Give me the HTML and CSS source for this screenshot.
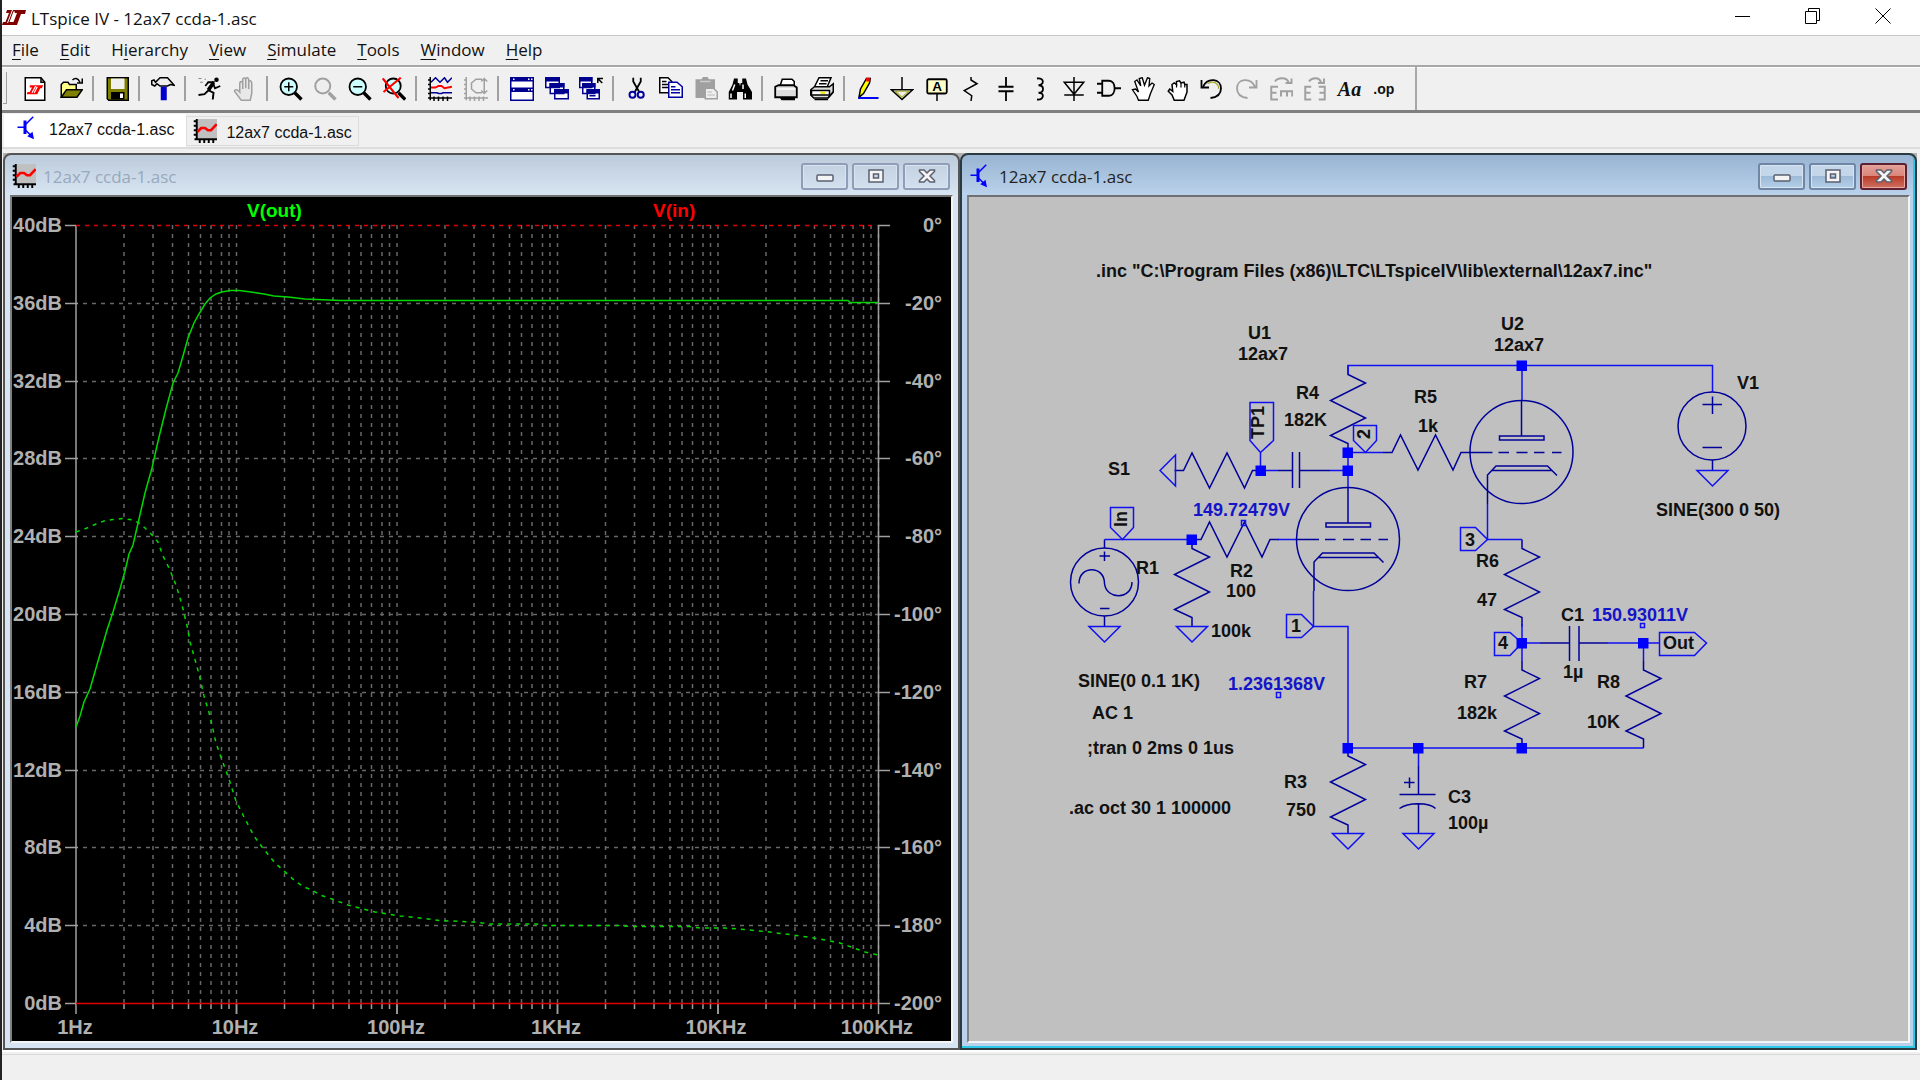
FILE: index.html
```html
<!DOCTYPE html>
<html lang="en">
<head>
<meta charset="utf-8">
<title>LTspice IV - 12ax7 ccda-1.asc</title>
<link rel="stylesheet" href="styles.css">
</head>
<body>
<svg class="defs" aria-hidden="true">
  <defs>
    <symbol id="i-plot" viewBox="0 0 16 16"><rect x="2" width="14" height="13" fill="#c0c0c0"/><path d="M2.500 0V14M1 13.500H16M.5 1.500H2M.5 4.500H2M.5 7.500H2M.5 10.500H2M4.500 14v2M7.500 14v2M10.500 14v2M13.500 14v2" stroke="#000" stroke-width="1.300" fill="none"/><path d="M3 8.500L5.500 6H8L10 7.500H12L15.800 3.500" fill="none" stroke="#f00" stroke-width="1.700"/></symbol>
    <symbol id="i-npn" viewBox="0 0 16 16"><path d="M1 7.500H6M6 6L11.500.500M6 9L10 13" stroke="#00f" fill="none"/><path d="M5 3h2v9H5zM12 15.500L7.500 13.500L11 10.500z" fill="#00f"/></symbol>
    <symbol id="w-min" viewBox="0 0 18 14"><rect x="1" y="6" width="16" height="6" rx="1" fill="#f4f4f4" stroke="#5a6070" stroke-width="1.500"/></symbol>
    <symbol id="w-max" viewBox="0 0 18 14"><path d="M2 1H16V13H2zM6.500 5V9H11.500V5z" fill="#f4f4f4" fill-rule="evenodd" stroke="#5a6070" stroke-width="1.500"/></symbol>
    <symbol id="w-close" viewBox="0 0 18 14"><path d="M1.500 1H6L9 4L12 1H16.500V2.500L12 7L16.500 11.500V13H12L9 10L6 13H1.500V11.500L6 7L1.500 2.500z" fill="#f4f4f4" stroke="#5a6070" stroke-width="1.500"/></symbol>
    <g id="res"><path d="M0 0V9L17.500 17.500L-17.500 35L17.500 52.500L-17.500 70L0 78V87"/></g>
    <path id="gnd" d="M-15.500 0H15.500L0 15.500z"/>
    <rect id="node" x="-5" y="-5" width="10.500" height="10.500"/>
    <g id="tube"><circle cx="0" cy="0" r="51.500"/><path d="M0-52V-16M-22-16H22.500V-12H-22zM-52 0.500H-29M-23 .5h10.500M-5 .5H6M12.500 .5H23M30.500 .5H40M-34 52V23L-25.500 14H26L35.500 23.500M-30 18.500H30"/></g>
    <g id="decade" class="grid"><path d="M48 224V1002M77 224V1002M96.500 224V1002M112.500 224V1002M124.500 224V1002M135 224V1002M145.500 224V1002M153 224V1002M160.500 224V1002"/></g>
    <path id="ticks" class="axis" d="M0 1002V1013M48 1003v5M77 1003v5M96.500 1003v5M112.500 1003v5M124.500 1003v5M135 1003v5M145.500 1003v5M153 1003v5M160.500 1003v10"/>
  </defs>
</svg>

<header class="titlebar">
  <svg class="logo" viewBox="0 0 24 18" aria-hidden="true"><path d="M5 1H15.500L15 2.500H11.500L7.500 13H11.500L15 4H12.500L13.500 1H24L23 5H19L15 16H0L1 13H3.500L7 4H4z" fill="#800000"/><path d="M10.500 1L5.500 14" stroke="#fff"/></svg>
  <h1>LTspice IV - 12ax7 ccda-1.asc</h1>
  <div class="sysbuttons">
    <button type="button" aria-label="Minimize"><svg viewBox="0 0 16 16"><path d="M0 8.500H15"/></svg></button>
    <button type="button" aria-label="Restore"><svg viewBox="0 0 16 16"><path d="M.5 3.500H11.500V15.500H.5zM3.500 3.500V.5H14.500V12.500H11.500"/></svg></button>
    <button type="button" aria-label="Close"><svg viewBox="0 0 16 16"><path d="M.5.500L15.500 15.500M15.500.500L.5 15.500"/></svg></button>
  </div>
</header>

<nav class="menubar" aria-label="Menu">
  <button type="button"><u>F</u>ile</button>
  <button type="button"><u>E</u>dit</button>
  <button type="button">H<u>i</u>erarchy</button>
  <button type="button"><u>V</u>iew</button>
  <button type="button"><u>S</u>imulate</button>
  <button type="button"><u>T</u>ools</button>
  <button type="button"><u>W</u>indow</button>
  <button type="button"><u>H</u>elp</button>
</nav>

<div class="toolbar" role="toolbar" aria-label="Tools">
  <div class="group two">
    <button type="button" aria-label="New schematic"><svg viewBox="0 0 16 16"><path d="M1.500.500H12L14.500 3.500V15.500H1.500z" fill="#fff" stroke="#000"/><path d="M12 .500V3.500H14.500" fill="none" stroke="#000"/><path d="M4.500 5.500H13.500L12.500 7.500H11.500L9.500 11.500H2.500L3 10H4.500L6 7H4.500z" fill="#f00"/><path d="M8.500 6L6 10.500M9.500 6.500L7.500 10.500" stroke="#fff" stroke-width=".8"/></svg></button>
    <button type="button" aria-label="Open"><svg viewBox="0 0 16 16"><path d="M1.500 13.500V5L3 3.500H6L7 5H11.500V8" fill="#ff8" stroke="#000"/><path d="M1.500 13.500L5 8.500H15.500L12 13.500z" fill="#808000" stroke="#000"/><path d="M9 2C10.500 .500 12.500 .500 14 3.500M15.500 1V4H12" fill="none" stroke="#000"/></svg></button>
  </div>
  <span class="sep"></span>
  <div class="group"><button type="button" aria-label="Save"><svg viewBox="0 0 16 16"><path d="M1.500.500H15.500V15.500H2.500L1.500 14.500z" fill="#808000" stroke="#000"/><path d="M4 1H13V8H4z" fill="#f0f0f0"/><path d="M4 10H13V15H4z" fill="#000"/><path d="M10 11h2v3h-2z" fill="#fff"/></svg></button></div>
  <span class="sep"></span>
  <div class="group"><button type="button" aria-label="Control panel"><svg viewBox="0 0 16 16"><path d="M.5 5V2.500L2 2L3 3.500L6 .500H11L15.500 5.500L13 5L11 6H6L4 4.500L2.500 6z" fill="#eee" stroke="#000"/><path d="M6.500 6.500H10.500V15.500H6.500z" fill="#00c"/></svg></button></div>
  <span class="sep"></span>
  <div class="group two">
    <button type="button" aria-label="Run"><svg viewBox="0 0 16 16"><circle cx="13" cy="1.800" r="1.500"/><path d="M7 3.500L11 3.500L8 9L11 10.500L10.500 15" fill="none" stroke="#000" stroke-width="1.300"/><path d="M10.500 2.500L12 4.500L8.500 9.500L6.500 8z"/><path d="M7.500 3.500L5.500 6M11 5L12 7.500L15.500 6M7.500 9L5 11.500L1 12" fill="none" stroke="#000" stroke-width="1.200"/><path d="M1 1H3M2 3.500H4M5 1.500H6" stroke="#888" stroke-width=".8"/></svg></button>
    <button type="button" aria-label="Halt" disabled><svg viewBox="0 0 16 16"><path d="M4.500 10V4.500C4.500 2.500 6.500 2.500 6.500 4.500V8V2C6.500 .200 8.500 .200 8.500 2V7.500V1.800C8.500 0 10.500 0 10.500 2V8V3.500C10.500 2 12.500 2 12.500 4V11L11.500 15.500H5.500L1 9.500C1 8 3 8 4.500 10z" fill="#e8e8e8" stroke="#a0a0a0"/></svg></button>
  </div>
  <span class="sep"></span>
  <div class="group four">
    <button type="button" aria-label="Zoom in"><svg viewBox="0 0 16 16"><circle cx="6.500" cy="6.500" r="5.500" fill="#cff" stroke="#000" stroke-width="1.200"/><path d="M3.500 6.500h6M6.500 3.500v6" stroke="#000"/><path d="M10.500 10.500L15 15" stroke="#000" stroke-width="2.200"/></svg></button>
    <button type="button" aria-label="Pan" disabled><svg viewBox="0 0 16 16"><circle cx="6.500" cy="6" r="5" fill="#eee" stroke="#a0a0a0" stroke-width="1.300"/><path d="M10.500 10.500L15 15" stroke="#a0a0a0" stroke-width="2.200"/></svg></button>
    <button type="button" aria-label="Zoom out"><svg viewBox="0 0 16 16"><circle cx="6.500" cy="6.500" r="5.500" fill="#cff" stroke="#000" stroke-width="1.200"/><path d="M3.500 6.500h6" stroke="#000"/><path d="M10.500 10.500L15 15" stroke="#000" stroke-width="2.200"/></svg></button>
    <button type="button" aria-label="Zoom full extents"><svg viewBox="0 0 16 16"><circle cx="7.500" cy="6" r="5" fill="#cff" stroke="#000" stroke-width="1.200"/><path d="M11 10.500L15.500 15" stroke="#000" stroke-width="2.200"/><path d="M.5 1L11 14M1 10L12.500.500" stroke="#f00" stroke-width="1.400"/></svg></button>
  </div>
  <span class="sep"></span>
  <div class="group two">
    <button type="button" aria-label="Autorange"><svg viewBox="0 0 16 16"><path d="M1.500 0V15.500M0 14H16M0 2H2M0 5H2M0 8H2M0 11H2M4 13v3M7 13v3M10 13v3M13 13v3" stroke="#000"/><path d="M2 3.500L5 .500L8 3.500L11 .500L13 3.500L16 .500M2 10.500H6L7 11H9L10 10.500H16" fill="none" stroke="#000090"/><path d="M2 7H5L7 6H9L11 7.500L16 6.500" fill="none" stroke="#f00" stroke-width="1.300"/></svg></button>
    <button type="button" aria-label="FFT" disabled><svg viewBox="0 0 16 16"><path d="M1.500 0V15.500M0 14H16M0 2H2M0 5H2M0 8H2M0 11H2M4 13v3M7 13v3M10 13v3M13 13v3M13.500 1V11M11.500 3L13.500 1L15.500 3M11.500 9L13.500 11L15.500 9M12 1.500H8L5 4V8L8 10.500H12" fill="none" stroke="#a0a0a0"/></svg></button>
  </div>
  <span class="sep"></span>
  <div class="group three">
    <button type="button" aria-label="Tile windows"><svg viewBox="0 0 16 16"><path d="M.5.500H15.500V15.500H.5z" fill="#fff" stroke="#000090"/><path d="M0 0H16V3H0zM0 7H16V10H0z" fill="#000090"/><path d="M12 1.500h1M14 1.500h1M12 8.500h1M14 8.500h1M2 1.500h1M2 8.500h1" stroke="#fff"/></svg></button>
    <button type="button" aria-label="Cascade windows"><svg viewBox="0 0 16 16"><g fill="#fff" stroke="#000090"><path d="M.5.500H9.500V7H.5zM3.500 4.500H12.500V11H3.500zM6.500 8.500H15.500V14.500H6.500z"/></g><path d="M0 0H10V3H0zM3 4H13V7H3zM6 8H16V11H6z" fill="#000090"/></svg></button>
    <button type="button" aria-label="Close all windows"><svg viewBox="0 0 16 16"><g fill="#fff" stroke="#000090"><path d="M.5.500H8.500V7H.5zM2.500 4.500H10.500V11H2.500zM5.500 8.500H13.500V14.500H5.500z"/></g><path d="M0 0H9V3H0zM2 4H11V7H2zM5 8H14V11H5z" fill="#000090"/><path d="M7 12.500h4" stroke="#000090"/><path d="M12.500 4V1H16M12.500 1L15.500 4" fill="none" stroke="#000"/></svg></button>
  </div>
  <span class="sep"></span>
  <div class="group four">
    <button type="button" aria-label="Cut"><svg viewBox="0 0 16 16"><path d="M5.500.500V3L9.500 10M10.500.500V3L6.500 10" fill="none" stroke="#000" stroke-width="1.200"/><circle cx="5" cy="11.800" r="2" fill="none" stroke="#0000a0" stroke-width="1.300"/><circle cx="10.500" cy="11.800" r="2" fill="none" stroke="#0000a0" stroke-width="1.300"/></svg></button>
    <button type="button" aria-label="Copy"><svg viewBox="0 0 16 16"><path d="M.5.500H6L8.500 3V10.500H.5z" fill="#fff" stroke="#000"/><path d="M2 3h3M2 5h5M2 7h5" stroke="#000"/><path d="M6.500 3.500H12L15.500 6.500V13.500H6.500z" fill="#fff" stroke="#0000a0"/><path d="M8 6.500h3M8 8.500h6M8 10.500h6" stroke="#0000a0"/></svg></button>
    <button type="button" aria-label="Paste" disabled><svg viewBox="0 0 16 16"><path d="M1 1.500H5L6 0H9L10 1.500H14V14H1z" fill="#a0a0a0"/><path d="M7.500 7.500H13L15.500 10V14.500H7.500z" fill="#eee" stroke="#a0a0a0"/><path d="M9 10h3M9 12h5M4 3h7" stroke="#ccc"/></svg></button>
    <button type="button" aria-label="Find"><svg viewBox="0 0 16 16"><path d="M4 1H6.500V4H7.500L8 6L8.500 4H9.500V1H12L13 5L16 10V15H10V10H6V15H.5V10L3 5z"/><path d="M2 11v3M11.500 11v3M4.500 5L3 9M10 5V8" stroke="#fff"/></svg></button>
  </div>
  <span class="sep"></span>
  <div class="group two">
    <button type="button" aria-label="Print preview"><svg viewBox="0 0 16 16"><path d="M4 6L5.500 1.500H12L13.500 3V6" fill="#fff" stroke="#000"/><path d="M.8 6.500L3 5.500H13L15.200 7V13.500H.8z" fill="#ddd" stroke="#000" stroke-width="1.200"/><path d="M2 8h12" stroke="#fff"/><path d="M4 14H14V15.500H5z"/></svg></button>
    <button type="button" aria-label="Print"><svg viewBox="0 0 16 16"><path d="M3 6.500L6 .500H14L11.500 6.500" fill="#fff" stroke="#000"/><path d="M7 2.500H12M6 4.500H11" stroke="#000"/><path d="M.5 8.500L3 6.500H13L15.500 4.500V10L12 14H2.500L.5 12z" fill="#ddd" stroke="#000"/><path d="M1 9H13V12H1zM12 14L15.500 10" fill="#fff" stroke="#000"/><path d="M7 10.500H10" stroke="#ee0" stroke-width="1.500"/><path d="M3 15h9" stroke="#000"/></svg></button>
  </div>
  <span class="sep"></span>
  <div class="group tools">
    <button type="button" aria-label="Wire"><svg viewBox="0 0 16 16"><path d="M2 13.500L3 8L7 1H9.500L9 4L5 11z" fill="#ff0" stroke="#000"/><path d="M6.500.500H9.500V3H7z" fill="#e00"/><path d="M1.500 14H15" stroke="#00f" stroke-width="1.300"/></svg></button>
    <button type="button" aria-label="Ground"><svg viewBox="0 0 16 16"><path d="M8 0V8M1 8.500H15L8 15z" fill="none" stroke="#000"/><path d="M3.500 9.500H12.500L8 13.500z" fill="none" stroke="#b0b030" stroke-width=".8"/></svg></button>
    <button type="button" aria-label="Label net"><svg viewBox="0 0 16 16"><rect x="1.500" y="1.500" width="13" height="9.500" rx="1" fill="#ffffc8" stroke="#000" stroke-width="1.200"/><text x="8" y="9.500" font-size="9" font-weight="bold" text-anchor="middle">A</text><path d="M8 11v5" stroke="#000"/></svg></button>
    <button type="button" aria-label="Resistor"><svg viewBox="0 0 16 16"><path d="M8 0V2L12 4.500L3.500 9L8.500 12.500L8 16" fill="none" stroke="#000"/></svg></button>
    <button type="button" aria-label="Capacitor"><svg viewBox="0 0 16 16"><path d="M8 0V6M3 6.500H13M3 9.500H13M8 10V16" stroke="#000" stroke-width="1.200"/></svg></button>
    <button type="button" aria-label="Inductor"><svg viewBox="0 0 16 16"><path d="M6 1C11 0 11 5.500 7 5.500C11 5.500 11 10.500 7 10.500C11.500 10.500 10.500 15.500 6 15" fill="none" stroke="#000" stroke-width="1.200"/></svg></button>
    <button type="button" aria-label="Diode"><svg viewBox="0 0 16 16"><path d="M8 0V16M1.500 3.500H14.500L8 11.500zM1.500 12H14.500" fill="none" stroke="#000"/></svg></button>
    <button type="button" aria-label="Component"><svg viewBox="0 0 16 16"><path d="M0 4.500H3M0 10.500H3M3.500 2.500H8C13 2.500 13 12.500 8 12.500H3.500zM12 7.500H16" fill="none" stroke="#000" stroke-width="1.200"/></svg></button>
    <button type="button" aria-label="Move"><svg viewBox="0 0 16 16"><path d="M1 8.500L3 8L5 10L2.500 3L4 2L6.500 6L5.500 1L7.500.500L9 5.500L11 .500L12.500 1L12 6L14 4L15.500 5L13 11L11.500 15.500H5L4 13z" fill="#fff" stroke="#000" stroke-width=".9"/></svg></button>
    <button type="button" aria-label="Drag"><svg viewBox="0 0 16 16"><path d="M4.500 9.500L4 5L5.500 4L7 5V3L9 2.500L10 4L12 3.500L12.500 5L14 5V10L12 15.500H5.500L4 12L1.500 9.500L2.500 8z" fill="#fff" stroke="#000"/><path d="M7 5v2M10 4v3M12.500 5v2" stroke="#000" stroke-width=".8"/></svg></button>
    <button type="button" aria-label="Undo"><svg viewBox="0 0 16 16"><path d="M1 2V7H6" fill="none" stroke="#000" stroke-width="1.200"/><path d="M2 6.500C5 0 14 1 14 7.500C14 11 12 13.500 7 14" fill="none" stroke="#000" stroke-width="1.200"/><path d="M5 4.500C9 1.800 12.500 4.500 12.500 8" fill="none" stroke="#aa3" stroke-width=".8"/></svg></button>
    <button type="button" aria-label="Redo" disabled><svg viewBox="0 0 16 16"><path d="M15 2V7H10M14 6.500C11 0 2 1 2 7.500C2 11 4 13.500 9 14" fill="none" stroke="#a0a0a0" stroke-width="1.200"/></svg></button>
    <button type="button" aria-label="Rotate" disabled><svg viewBox="0 0 16 16"><path d="M6 6.500H1.500V15H6M1.500 10.500H5M8 13V9.500H16M12 9.500V13M15.500 9.500V13M4 3C6 0 12 0 13 3.500M15 1V4H11" fill="none" stroke="#a0a0a0" stroke-width="1.300"/></svg></button>
    <button type="button" aria-label="Mirror" disabled><svg viewBox="0 0 16 16"><path d="M5.500 6.500H1.500V15H5.500M1.500 10.500H5M10.500 6.500H14.500V15H10.500M14.500 10.500H11M4 3C6 0 11 0 12 3.500M14 1V4H10" fill="none" stroke="#a0a0a0" stroke-width="1.300"/></svg></button>
    <button type="button" class="aa">Aa</button>
    <button type="button" class="op">.op</button>
  </div>
  <span class="toolbar-end"></span>
</div>

<div class="tabs" role="tablist">
  <button type="button" role="tab" aria-selected="true" class="tab active"><svg><use href="#i-npn"/></svg><span>12ax7 ccda-1.asc</span></button>
  <button type="button" role="tab" aria-selected="false" class="tab"><svg><use href="#i-plot"/></svg><span>12ax7 ccda-1.asc</span></button>
</div>

<main class="workspace">
  <section class="window">
    <header class="caption">
      <svg class="caption-icon"><use href="#i-plot"/></svg>
      <h2>12ax7 ccda-1.asc</h2>
      <div class="winbuttons">
        <button type="button" aria-label="Minimize"><svg><use href="#w-min"/></svg></button>
        <button type="button" aria-label="Maximize"><svg><use href="#w-max"/></svg></button>
        <button type="button" aria-label="Close"><svg><use href="#w-close"/></svg></button>
      </div>
    </header>
    <svg class="client plot" viewBox="12 196 939 844" role="img" aria-label="Frequency response">
      <use href="#decade" x="76"/><use href="#decade" x="236.500"/><use href="#decade" x="397"/><use href="#decade" x="557.500"/><use href="#decade" x="718"/>
      <path class="grid" d="M83 302.500H878M83 380.500H878M83 457.500H878M83 535.500H878M83 613.500H878M83 691.500H878M83 769.500H878M83 846.500H878M83 924.500H878"/>
      <use href="#ticks" x="76"/><use href="#ticks" x="236.500"/><use href="#ticks" x="397"/><use href="#ticks" x="557.500"/><use href="#ticks" x="718"/>
      <path class="axis" d="M76 224V1002M878.500 224V1002M65 224.500H76M65 302.500H78M65 380.500H78M65 457.500H78M65 535.500H78M65 613.500H78M65 691.500H78M65 769.500H78M65 846.500H78M65 924.500H78M65 1002.500H76M878 224.500H890M878 302.500H890M878 380.500H890M878 457.500H890M878 535.500H890M878 613.500H890M878 691.500H890M878 769.500H890M878 846.500H890M878 924.500H890M878 1002.500H890"/>
      <path class="vin phase" d="M76 224.500H878"/>
      <path class="vin" d="M76 1002.500H878"/>
      <path class="vout" d="M76 726L80 715L84 701L90 688L107 629L113 611L120 588L125 570L129 553L133 544L139 518L145 492L152 467L159 436L166 408L173 382L178 372L183 355L188 337L194 322L199 313L205 303L210 297L216 293L222 291L230 289.500L239 289.500L251 291L264 293L274 295L288 296L305 298L341 299.500H848L850 301.500H878"/>
      <path class="vout phase" d="M76 531L87 527L96 523L104 520L113 518.500L123 517.500L133 519L139 522L145 527L152 534L158 541L163 555L169 567L176 584L180 597L183 608L188 629L190 641L194 655L199 673L204 695L210 715L216 742L222 759L229 778L236 800L244 816L254 835L262 846L275 862L284 870L295 880L304 886L312 889L320 894L332 898L348 904L375 911L400 915L420 917L440 919.500L473 921L490 923H537L545 924.500H620L630 925.500H690L700 927H725L750 929L770 931L800 935L820 938L840 942L865 951L878 954"/>
      <g class="trace">
        <text x="247" y="216" fill="#0f0">V(out)</text><text x="653" y="216" fill="#f00">V(in)</text>
      </g>
      <g class="scale right">
        <text x="62" y="231">40dB</text><text x="62" y="309">36dB</text><text x="62" y="387">32dB</text><text x="62" y="464">28dB</text><text x="62" y="542">24dB</text><text x="62" y="620">20dB</text><text x="62" y="698">16dB</text><text x="62" y="776">12dB</text><text x="62" y="853">8dB</text><text x="62" y="931">4dB</text><text x="62" y="1009">0dB</text>
        <text x="942" y="231">0°</text><text x="942" y="309">-20°</text><text x="942" y="387">-40°</text><text x="942" y="464">-60°</text><text x="942" y="542">-80°</text><text x="942" y="620">-100°</text><text x="942" y="698">-120°</text><text x="942" y="776">-140°</text><text x="942" y="853">-160°</text><text x="942" y="931">-180°</text><text x="942" y="1009">-200°</text>
      </g>
      <g class="scale middle">
        <text x="75" y="1033">1Hz</text><text x="235" y="1033">10Hz</text><text x="396" y="1033">100Hz</text><text x="556" y="1033">1KHz</text><text x="716" y="1033">10KHz</text><text x="877" y="1033">100KHz</text>
      </g>
    </svg>
  </section>

  <section class="window active">
    <header class="caption">
      <svg class="caption-icon"><use href="#i-npn"/></svg>
      <h2>12ax7 ccda-1.asc</h2>
      <div class="winbuttons">
        <button type="button" aria-label="Minimize"><svg><use href="#w-min"/></svg></button>
        <button type="button" aria-label="Maximize"><svg><use href="#w-max"/></svg></button>
        <button type="button" aria-label="Close" class="close"><svg><use href="#w-close"/></svg></button>
      </div>
    </header>
    <svg class="client schematic" viewBox="969 196 939 844" role="img" aria-label="Amplifier schematic">
      <g class="part">
        <use href="#res" x="1348" y="364.500"/>
        <use href="#res" x="1522" y="538.500"/>
        <use href="#res" x="1522" y="660"/>
        <use href="#res" x="1643.500" y="660"/>
        <use href="#res" x="1348" y="746"/>
        <use href="#res" x="1192" y="538.500"/>
        <use href="#res" transform="translate(1192 538.500) rotate(-90)"/>
        <use href="#res" transform="translate(1383 451.500) rotate(-90)"/>
        <use href="#res" transform="translate(1174.500 469.500) rotate(-90)"/>
        <use href="#tube" x="1521.500" y="451"/>
        <use href="#tube" x="1348" y="538"/>
        <path d="M1278 469.500H1292.500M1292.500 451V487M1299.500 451V487M1299.500 469.500H1330"/>
        <path d="M1540 642H1569.500M1569.500 625V660M1579 625V660M1579 642H1608"/>
        <path d="M1418.500 765V793.500M1399.500 793.500H1435.500M1399.500 807.500C1408 801 1429 801 1435.500 807.500M1418.500 802.500V832M1404 781.500H1414.500M1409.500 776.500V787"/>
        <circle cx="1104.500" cy="581" r="34"/>
        <path d="M1104.500 538.500V547M1099.500 555H1110M1104.500 550.500V560M1100 607.500H1109.500M1104.500 615V625M1079 582.500C1079 564 1104.500 564 1104.500 582.500C1106 599 1132 599 1132 581"/>
        <circle cx="1712" cy="425" r="34"/>
        <path d="M1712.500 390V391M1702.500 403.500H1722M1712.500 395.500V413M1702.500 446.500H1722M1712.500 459V469.500"/>
      </g>
      <g class="wire">
        <path d="M1348 373V364.500H1712.500V391M1522 364.500V399M1348 451.500V486M1348 451.500H1383M1260.500 469.500H1278M1330 469.500H1348M1104.500 538.500H1192M1278 538.500H1296M1313.500 590V625.500H1348V747H1643.500M1487.500 503V538.500H1522M1522 623V660M1522 642H1540M1608 642H1659.500M1643.500 642V660M1418.500 747V765"/>
        <use href="#gnd" x="1104.500" y="625.500"/><use href="#gnd" x="1192" y="625.500"/><use href="#gnd" x="1348" y="832.500"/><use href="#gnd" x="1418.500" y="832.500"/><use href="#gnd" x="1712.500" y="469.500"/>
        <use href="#gnd" transform="translate(1175.500 469.500) rotate(90)"/>
        <path d="M1260.500 469.500V451.500L1250 439.500V401.500H1273.500V439.500L1260.500 451.500"/>
        <path d="M1353.500 424.500H1376.500V439.500L1365.500 451.500L1353.500 439.500z"/>
        <path d="M1110.500 506.500H1133.500V526.500L1122.500 538.500L1110.500 526.500z"/>
        <path d="M1286.500 613.500H1301.500L1313.500 625.500L1301.500 636.500H1286.500z"/>
        <path d="M1460.500 526.500H1475.500L1487.500 538.500L1475.500 549.500H1460.500z"/>
        <path d="M1494.500 631.500H1510L1522 642L1510 654.500H1494.500z"/>
        <path d="M1659.500 631.500H1694.500L1706.500 642L1694.500 654.500H1659.500z"/>
        <path d="M1241.500 519.500h4v5h-4zM1640.500 622.500h4v4h-4zM1276.500 691.500h4v5h-4z"/>
      </g>
      <g fill="#0000ff">
        <use href="#node" x="1521.500" y="364.500"/><use href="#node" x="1347.500" y="451.500"/><use href="#node" x="1347.500" y="469.500"/><use href="#node" x="1260.500" y="469.500"/><use href="#node" x="1191.500" y="538.500"/><use href="#node" x="1347.500" y="747"/><use href="#node" x="1418" y="747"/><use href="#node" x="1521.500" y="747"/><use href="#node" x="1521.500" y="642"/><use href="#node" x="1643" y="642"/>
      </g>
      <g class="label">
        <text x="1096" y="276">.inc "C:\Program Files (x86)\LTC\LTspiceIV\lib\external\12ax7.inc"</text>
        <text x="1248" y="338">U1</text><text x="1238" y="359">12ax7</text>
        <text x="1296" y="398">R4</text><text x="1284" y="425">182K</text>
        <text x="1414" y="402">R5</text><text x="1418" y="431">1k</text>
        <text x="1108" y="474">S1</text>
        <text x="1136" y="573">R1</text><text x="1230" y="576">R2</text><text x="1226" y="596">100</text><text x="1211" y="636">100k</text>
        <text x="1291" y="631">1</text><text x="1465" y="545">3</text><text x="1498" y="648">4</text><text x="1663" y="648">Out</text>
        <text transform="translate(1264 438) rotate(-90)">TP1</text><text transform="translate(1370 438) rotate(-90)">2</text><text transform="translate(1127 526) rotate(-90)">In</text>
        <text x="1501" y="329">U2</text><text x="1494" y="350">12ax7</text>
        <text x="1737" y="388">V1</text><text x="1656" y="515">SINE(300 0 50)</text>
        <text x="1476" y="566">R6</text><text x="1477" y="605">47</text>
        <text x="1561" y="620">C1</text><text x="1563" y="677">1µ</text>
        <text x="1464" y="687">R7</text><text x="1457" y="718">182k</text>
        <text x="1597" y="687">R8</text><text x="1587" y="727">10K</text>
        <text x="1284" y="787">R3</text><text x="1286" y="815">750</text>
        <text x="1448" y="802">C3</text><text x="1448" y="828">100µ</text>
        <text x="1078" y="686">SINE(0 0.1 1K)</text><text x="1092" y="718">AC 1</text><text x="1087" y="753">;tran 0 2ms 0 1us</text><text x="1069" y="813">.ac oct 30 1 100000</text>
      </g>
      <g class="label volts">
        <text x="1193" y="515">149.72479V</text><text x="1592" y="620">150.93011V</text><text x="1228" y="689">1.2361368V</text>
      </g>
    </svg>
  </section>
</main>
<footer class="statusbar"></footer>
</body>
</html>
```

FILE: styles.css
```css
* { box-sizing: border-box; }

body {
  margin: 0;
  min-height: 100vh;
  display: flex;
  flex-direction: column;
  background: #f0f0f0;
  border-left: 2px solid #222;
  color: #111;
  font-family: "Open Sans", "Noto Sans", sans-serif;
  font-size: 17px;
}

button {
  margin: 0;
  padding: 0;
  border: 0;
  background: none;
  color: inherit;
  font: inherit;
}

h1, h2 { margin: 0; font-size: 17px; font-weight: normal; line-height: 24px; }

.defs { position: absolute; width: 0; height: 0; }

/* Application title */
.titlebar {
  display: flex;
  align-items: center;
  height: 36px;
  background: #fff;
  border-bottom: 1px solid #c8c8c8;
}
.logo { width: 24px; height: 18px; margin-right: 5px; }
.titlebar h1 { padding-top: 2px; }
.sysbuttons { display: flex; margin: 0 2px 0 auto; }
.sysbuttons button { width: 70px; height: 34px; }
.sysbuttons svg { width: 16px; height: 16px; fill: none; stroke: #000; }

/* Menu */
.menubar {
  display: flex;
  height: 31px;
  border-bottom: 2px solid #a8a8a8;
}
.menubar button { padding: 0 11px 1px 10px; line-height: 24px; }
.menubar u { text-underline-offset: 3px; }

/* Toolbar */
.toolbar {
  display: flex;
  align-items: center;
  height: 46px;
  padding: 0 0 1px 18px;
  border-top: 1px solid #fff;
  border-bottom: 3px solid #808080;
}
.toolbar::before {
  content: "";
  align-self: stretch;
  margin: 4px 16px 5px -17px;
  width: 3px;
  border-right: 1px solid #a0a0a0;
  border-bottom: 1px solid #a0a0a0;
}
.group { display: flex; justify-content: space-between; width: 24px; }
.group.two { width: 60px; }
.group.three { width: 93px; }
.group.four { width: 127px; }
.group.tools { width: 540px; }
.toolbar button { width: 24px; height: 24px; line-height: 24px; }
.toolbar svg { display: block; width: 24px; height: 24px; font-family: "Liberation Sans", sans-serif; }
.sep { width: 2px; height: 25px; margin: 0 11px 0 9px; background: #a0a0a0; }
.toolbar-end { width: 2px; height: 43px; margin-left: 19px; background: #a8a8a8; }
.toolbar .aa { font: italic bold 20px/24px "Liberation Serif", serif; }
.toolbar .op { font: bold 14px/24px "Liberation Sans", sans-serif; }

/* Document tabs */
.tabs {
  display: flex;
  height: 36px;
  padding-left: 2px;
  border-bottom: 2px solid #dcdcdc;
  margin-bottom: 4px;
  font-family: "Liberation Sans", sans-serif;
  font-size: 16px;
}
.tab {
  display: flex;
  align-items: center;
  gap: 9px;
  height: 30px;
  margin-top: 3px;
  padding: 0 6px;
  border: 1px solid #dcdcdc;
}
.tab svg { width: 24px; height: 24px; }
.tab span { padding-top: 4px; }
.tab.active { height: 33px; margin-top: 1px; padding: 0 12px 6px 12px; border: 0; background: #fff; }

/* Document windows */
.workspace {
  display: grid;
  grid-template-columns: 1fr 1fr;
  margin: 0 3px 0 1px;
  background: #b0b0b0;
}
.window {
  padding: 0 5px 5px;
  border: 2px solid #555;
  border-radius: 8px 8px 0 0;
  background: linear-gradient(#bccbdb, #d7e4f2 39px);
}
.window.active {
  border-color: #2a3a40;
  background: linear-gradient(#98b4d2, #b9d1ea 39px);
  box-shadow: inset -2px -2px 0 #2cc8e8;
}
.caption { display: flex; align-items: center; height: 40px; }
.caption-icon { width: 24px; height: 24px; margin: 2px 7px 0 2px; }
.window.active .caption-icon { margin-right: 6px; }
.caption h2 { color: #98a9bc; padding-top: 3px; }
.window.active .caption h2 { color: #222; }
.winbuttons { display: flex; gap: 4px; margin: 2px 3px 0 auto; }
.winbuttons button {
  display: flex;
  align-items: center;
  justify-content: center;
  width: 47px;
  height: 27px;
  border: 2px solid #8e9db8;
  border-radius: 3px;
  box-shadow: inset 0 0 0 1px #d8e4f0;
}
.winbuttons svg { width: 18px; height: 14px; }
.window.active .winbuttons button {
  border-color: #6f86a6;
  background: linear-gradient(#c4d6ea 50%, #9dbad8 50%, #b4cfe8);
}
.window.active .winbuttons .close {
  border-color: #5c2030;
  background: linear-gradient(#e4a098, #d98478 50%, #b83c28 50%, #d07060);
  box-shadow: inset 0 0 0 1px #e8a8a0;
}
.client {
  display: block;
  width: 100%;
  height: auto;
  border: 2px solid;
  border-color: #707070 #f4f4f4 #f4f4f4 #808080;
  font-family: "Liberation Sans", Arial, sans-serif;
  font-weight: bold;
}

/* Waveform plot */
.plot { background: #000; }
.grid { fill: none; stroke: #686868; stroke-width: 1.5; stroke-dasharray: 4 5; }
.axis { fill: none; stroke: #a0a0a0; stroke-width: 1.5; }
.vin { fill: none; stroke: #e00000; stroke-width: 1.5; }
.vout { fill: none; stroke: #00d800; stroke-width: 1.5; }
.phase { stroke-dasharray: 4 5; }
.trace { font-size: 19px; }
.scale { font-size: 20px; fill: #b0b0b0; }
.right { text-anchor: end; }
.middle { text-anchor: middle; }

/* Schematic */
.schematic { background: #c0c0c0; }
.part { fill: none; stroke: #00009a; stroke-width: 1.5; }
.wire { fill: none; stroke: #1010f4; stroke-width: 1.5; }
.label { font-size: 18px; fill: #111; }
.volts { fill: #1414c8; }

.statusbar {
  flex: 1;
  min-height: 24px;
  border-top: 2px solid #fff;
}
.statusbar::before {
  content: "";
  display: block;
  margin-top: 2px;
  border-top: 1px solid #d8d8d8;
}
```
